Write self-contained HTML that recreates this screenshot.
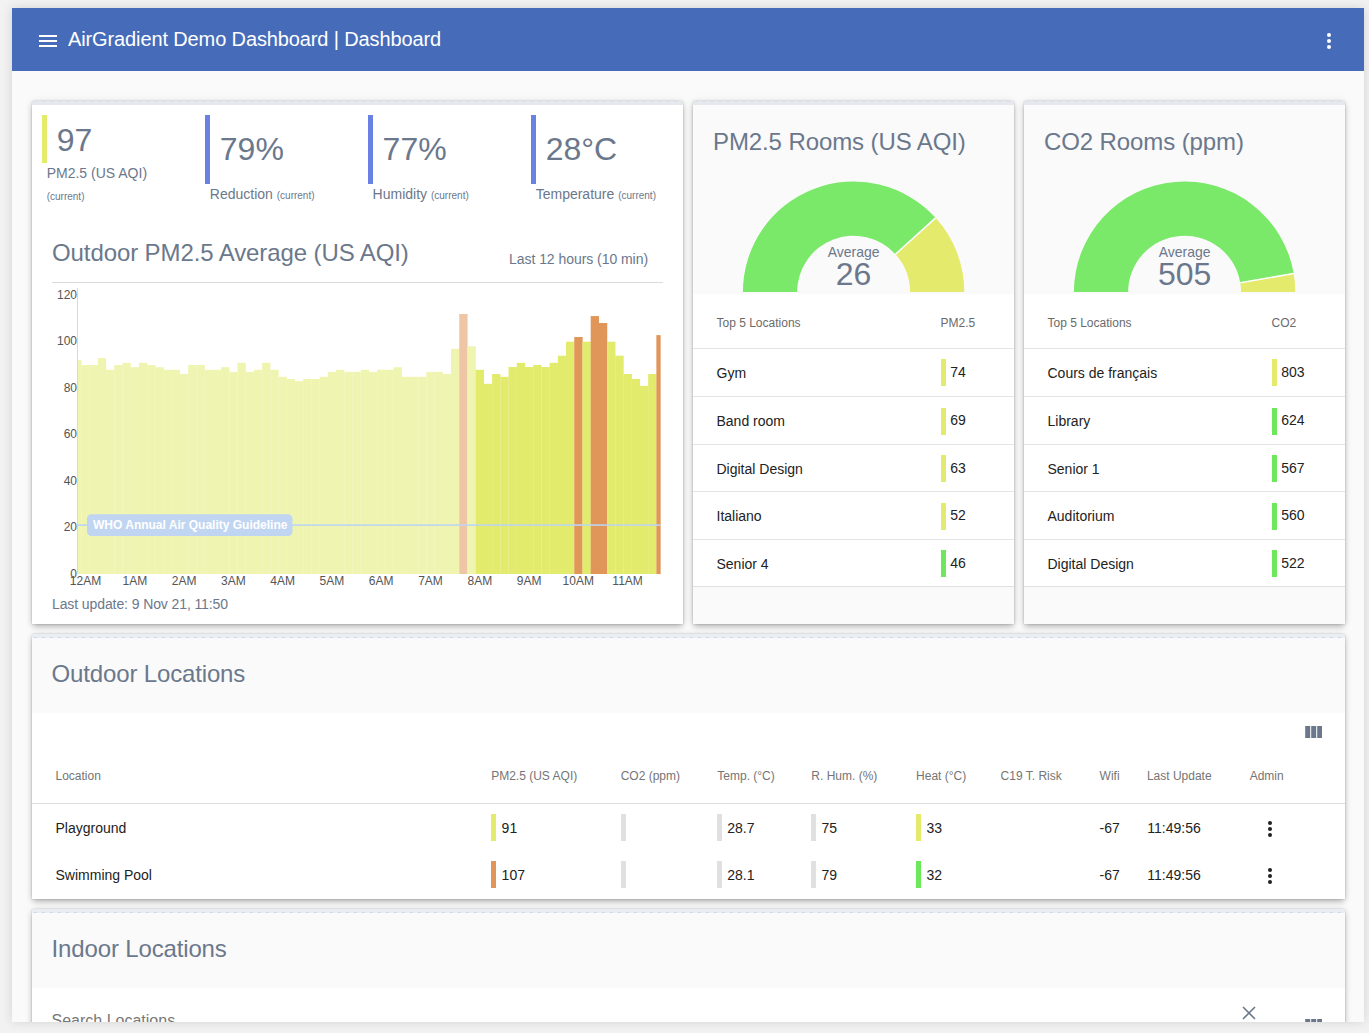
<!DOCTYPE html>
<html lang="en"><head><meta charset="utf-8"><title>AirGradient Demo Dashboard | Dashboard</title>
<style>
*{box-sizing:border-box}
html,body{margin:0;padding:0}
body{width:1369px;height:1033px;overflow:hidden;background:#f1f2f1;font-family:"Liberation Sans",Arial,Helvetica,sans-serif;color:#6b788c;position:relative}
.frame{position:absolute;left:12px;top:8px;width:1352px;height:1014px;background:#fafafa;overflow:hidden;box-shadow:0 0 10px rgba(0,0,0,.13)}
.inner{position:absolute;left:-12px;top:-8px;width:1369px;height:1033px}
.hdr{position:absolute;left:12px;top:8px;width:1352px;height:63px;background:#466cb9}
.hdr .t{position:absolute;left:56px;top:19px;font-size:20px;line-height:24px;color:#fff;white-space:nowrap;letter-spacing:-0.12px}
.card{position:absolute;background:#fff;border-top:3px solid #e5e8ed;border-radius:2px 2px 0 0;box-shadow:0 3px 6px -1px rgba(0,0,0,.3),0 0 2px rgba(0,0,0,.2),0 0 9px rgba(0,0,0,.07)}
.card::before{content:"";position:absolute;left:0;right:0;top:-3.2px;height:3.8px;background:#e5e8ed;border-radius:2px 2px 0 0}
.card::after{content:"";position:absolute;left:2px;right:2px;top:-2.9px;height:1px;background:repeating-linear-gradient(90deg,#dbe1ec 0 3.2px,transparent 3.2px 8px)}
.sect{border-top-color:#eaedf1}
.sect::before{top:-3.4px;height:4.4px;background:#eaedf1}
.sect::after{top:0.1px;background:repeating-linear-gradient(90deg,#cdd9ea 0 3.2px,transparent 3.2px 8px)}
.stat{position:absolute;top:11px;height:90px}
.stat .bar{position:absolute;left:0;top:0;width:5px}
.stat .v{position:absolute;left:15px;font-size:32px;line-height:36px;white-space:nowrap}
.stat .l{position:absolute;left:5px;font-size:14px;line-height:22px;white-space:nowrap}
.stat small{font-size:10px}
.ctitle{position:absolute;left:20px;top:134px;font-size:24px;line-height:30px;white-space:nowrap;letter-spacing:-0.1px}
.csub{position:absolute;right:35px;top:146px;font-size:14px;line-height:18px;white-space:nowrap;color:#6b788c;letter-spacing:-0.05px}
.chr{position:absolute;left:20px;top:178px;width:611px;height:1px;background:#dcdcdc}
.chart{position:absolute;left:0;top:0}
.chart text{font-size:12px;fill:#555}
.upd{position:absolute;left:20px;top:491px;font-size:14px;line-height:18px;letter-spacing:-0.1px}
.room{background:#fafafa}
.rtitle{position:absolute;left:20px;top:23.3px;font-size:24px;line-height:30px;white-space:nowrap;letter-spacing:-0.1px}
.gsvg{position:absolute;left:0;top:0;overflow:hidden}
.gsvg text{font-family:"Liberation Sans",Arial,sans-serif}
.rtable{position:absolute;left:0;top:189.5px;width:321px;background:#fff;border-bottom:1px solid #e0e0e0}
.rh,.rr{position:relative;height:47.5px;border-top:1px solid #e4e4e4}
.rh{height:54px;border-top:none;font-size:12px;color:#6a6a6a}
.rr{font-size:14px;color:#222}
.rh+.rr{height:48.5px}
.rh+.rr .c1{line-height:48px}
.rh+.rr .c2{line-height:46px}
.c1{position:absolute;left:23.5px;top:0;line-height:49px}
.c2{position:absolute;left:247.5px;top:0;line-height:47px}
.rh .c1,.rh .c2{line-height:58.6px}
.rr .c2 i{display:inline-block;width:5px;height:27px;vertical-align:middle;margin-right:5px;position:relative;top:0px;left:0.3px;margin-right:4.7px}
.sect{background:#fafafa}
.stitle{position:absolute;left:19.6px;top:22px;font-size:24px;line-height:30px;white-space:nowrap;letter-spacing:-0.15px}
.tbl{position:absolute;left:0;top:75.5px;width:100%;background:#fff}
.th{position:absolute;font-size:12px;color:#757575;white-space:nowrap;line-height:14px}
.td{position:absolute;font-size:14px;color:#222;white-space:nowrap;line-height:16px}
.ind{position:absolute;width:5px;height:27px}
</style></head><body>
<div class="frame"><div class="inner">
<div class="hdr">
<svg style="position:absolute;left:23.7px;top:21px" width="24" height="24" viewBox="0 0 24 24"><path d="M3 6h18v2H3zM3 11h18v2H3zM3 16h18v2H3z" fill="#fff"/></svg>
<div class="t">AirGradient Demo Dashboard | Dashboard</div>
<svg style="position:absolute;left:1304.6px;top:21px" width="24" height="24" viewBox="0 0 24 24"><circle cx="12" cy="6" r="2" fill="#fff"/><circle cx="12" cy="12" r="2" fill="#fff"/><circle cx="12" cy="18" r="2" fill="#fff"/></svg>
</div>

<div class="card" style="left:32px;top:101px;width:651px;height:523px">
<div class="stat" style="left:9.7px"><div class="bar" style="background:#e3ea6c;height:48px"></div><div class="v" style="top:6.6px">97</div><div class="l" style="top:47px;line-height:22px">PM2.5 (US AQI)<br><small>(current)</small></div></div>
<div class="stat" style="left:172.8px"><div class="bar" style="background:#6881e2;height:69px"></div><div class="v" style="top:15.7px">79%</div><div class="l" style="top:68px">Reduction <small>(current)</small></div></div>
<div class="stat" style="left:335.6px"><div class="bar" style="background:#6881e2;height:69px"></div><div class="v" style="top:15.7px">77%</div><div class="l" style="top:68px">Humidity <small>(current)</small></div></div>
<div class="stat" style="left:498.7px"><div class="bar" style="background:#6881e2;height:69px"></div><div class="v" style="top:15.7px">28°C</div><div class="l" style="top:68px">Temperature <small>(current)</small></div></div>
<div class="ctitle">Outdoor PM2.5 Average (US AQI)</div>
<div class="csub">Last 12 hours (10 min)</div>
<div class="chr"></div>
<svg class="chart" width="651" height="517" viewBox="0 0 651 517">
<g transform="translate(0,0)">
<rect x="45.30" y="256.20" width="4.26" height="213.80" fill="#f0f4b1"/>
<rect x="49.41" y="261.00" width="8.36" height="209.00" fill="#f0f4b1"/>
<rect x="57.62" y="261.00" width="8.36" height="209.00" fill="#f0f4b1"/>
<rect x="65.83" y="254.10" width="8.36" height="215.90" fill="#f0f4b1"/>
<rect x="74.05" y="265.80" width="8.36" height="204.20" fill="#f0f4b1"/>
<rect x="82.26" y="261.00" width="8.36" height="209.00" fill="#f0f4b1"/>
<rect x="90.48" y="258.80" width="8.36" height="211.20" fill="#f0f4b1"/>
<rect x="98.69" y="263.20" width="8.36" height="206.80" fill="#f0f4b1"/>
<rect x="106.91" y="258.80" width="8.36" height="211.20" fill="#f0f4b1"/>
<rect x="115.12" y="261.00" width="8.36" height="209.00" fill="#f0f4b1"/>
<rect x="123.33" y="263.20" width="8.36" height="206.80" fill="#f0f4b1"/>
<rect x="131.55" y="265.80" width="8.36" height="204.20" fill="#f0f4b1"/>
<rect x="139.76" y="265.80" width="8.36" height="204.20" fill="#f0f4b1"/>
<rect x="147.98" y="270.00" width="8.36" height="200.00" fill="#f0f4b1"/>
<rect x="156.19" y="261.00" width="8.36" height="209.00" fill="#f0f4b1"/>
<rect x="164.40" y="261.00" width="8.36" height="209.00" fill="#f0f4b1"/>
<rect x="172.62" y="265.80" width="8.36" height="204.20" fill="#f0f4b1"/>
<rect x="180.83" y="265.80" width="8.36" height="204.20" fill="#f0f4b1"/>
<rect x="189.05" y="263.20" width="8.36" height="206.80" fill="#f0f4b1"/>
<rect x="197.26" y="267.90" width="8.36" height="202.10" fill="#f0f4b1"/>
<rect x="205.47" y="258.80" width="8.36" height="211.20" fill="#f0f4b1"/>
<rect x="213.69" y="267.90" width="8.36" height="202.10" fill="#f0f4b1"/>
<rect x="221.90" y="265.80" width="8.36" height="204.20" fill="#f0f4b1"/>
<rect x="230.12" y="258.80" width="8.36" height="211.20" fill="#f0f4b1"/>
<rect x="238.33" y="265.80" width="8.36" height="204.20" fill="#f0f4b1"/>
<rect x="246.54" y="272.80" width="8.36" height="197.20" fill="#f0f4b1"/>
<rect x="254.76" y="275.00" width="8.36" height="195.00" fill="#f0f4b1"/>
<rect x="262.97" y="277.10" width="8.36" height="192.90" fill="#f0f4b1"/>
<rect x="271.19" y="275.00" width="8.36" height="195.00" fill="#f0f4b1"/>
<rect x="279.40" y="275.00" width="8.36" height="195.00" fill="#f0f4b1"/>
<rect x="287.61" y="272.80" width="8.36" height="197.20" fill="#f0f4b1"/>
<rect x="295.83" y="267.90" width="8.36" height="202.10" fill="#f0f4b1"/>
<rect x="304.04" y="265.80" width="8.36" height="204.20" fill="#f0f4b1"/>
<rect x="312.25" y="267.90" width="8.36" height="202.10" fill="#f0f4b1"/>
<rect x="320.47" y="267.90" width="8.36" height="202.10" fill="#f0f4b1"/>
<rect x="328.68" y="265.80" width="8.36" height="204.20" fill="#f0f4b1"/>
<rect x="336.90" y="267.90" width="8.36" height="202.10" fill="#f0f4b1"/>
<rect x="345.11" y="265.80" width="8.36" height="204.20" fill="#f0f4b1"/>
<rect x="353.32" y="265.80" width="8.36" height="204.20" fill="#f0f4b1"/>
<rect x="361.54" y="263.20" width="8.36" height="206.80" fill="#f0f4b1"/>
<rect x="369.75" y="272.80" width="8.36" height="197.20" fill="#f0f4b1"/>
<rect x="377.97" y="272.80" width="8.36" height="197.20" fill="#f0f4b1"/>
<rect x="386.18" y="272.80" width="8.36" height="197.20" fill="#f0f4b1"/>
<rect x="394.39" y="267.90" width="8.36" height="202.10" fill="#f0f4b1"/>
<rect x="402.61" y="267.90" width="8.36" height="202.10" fill="#f0f4b1"/>
<rect x="410.82" y="270.00" width="8.36" height="200.00" fill="#f0f4b1"/>
<rect x="419.04" y="244.80" width="8.36" height="225.20" fill="#f0f4b1"/>
<rect x="427.25" y="210.00" width="8.36" height="260.00" fill="#eec6a6"/>
<rect x="435.46" y="242.30" width="8.36" height="227.70" fill="#f0f4b1"/>
<rect x="443.68" y="265.80" width="8.36" height="204.20" fill="#e3eb6d"/>
<rect x="451.89" y="279.80" width="8.36" height="190.20" fill="#e3eb6d"/>
<rect x="460.11" y="270.00" width="8.36" height="200.00" fill="#e3eb6d"/>
<rect x="468.32" y="272.80" width="8.36" height="197.20" fill="#e3eb6d"/>
<rect x="476.54" y="263.00" width="8.36" height="207.00" fill="#e3eb6d"/>
<rect x="484.75" y="258.80" width="8.36" height="211.20" fill="#e3eb6d"/>
<rect x="492.96" y="263.00" width="8.36" height="207.00" fill="#e3eb6d"/>
<rect x="501.18" y="260.90" width="8.36" height="209.10" fill="#e3eb6d"/>
<rect x="509.39" y="263.00" width="8.36" height="207.00" fill="#e3eb6d"/>
<rect x="517.61" y="258.80" width="8.36" height="211.20" fill="#e3eb6d"/>
<rect x="525.82" y="251.70" width="8.36" height="218.30" fill="#e3eb6d"/>
<rect x="534.03" y="237.70" width="8.36" height="232.30" fill="#e3eb6d"/>
<rect x="542.25" y="233.00" width="8.36" height="237.00" fill="#df9658"/>
<rect x="550.46" y="237.70" width="8.36" height="232.30" fill="#e3eb6d"/>
<rect x="558.68" y="212.10" width="8.36" height="257.90" fill="#df9658"/>
<rect x="566.89" y="219.00" width="8.36" height="251.00" fill="#df9658"/>
<rect x="575.10" y="237.70" width="8.36" height="232.30" fill="#e3eb6d"/>
<rect x="583.32" y="251.70" width="8.36" height="218.30" fill="#e3eb6d"/>
<rect x="591.53" y="270.00" width="8.36" height="200.00" fill="#e3eb6d"/>
<rect x="599.75" y="274.90" width="8.36" height="195.10" fill="#e3eb6d"/>
<rect x="607.96" y="281.90" width="8.36" height="188.10" fill="#e3eb6d"/>
<rect x="616.17" y="270.00" width="8.36" height="200.00" fill="#e3eb6d"/>
<rect x="624.39" y="231.10" width="4.26" height="238.90" fill="#df9658"/>
<rect x="45" y="184" width="1" height="285.5" fill="#d9d9d9"/>
<rect x="45" y="420.29999999999995" width="583.5" height="1.6" fill="#bcd5f1"/>
<rect x="55" y="410.20000000000005" width="205.5" height="21.8" rx="4.5" fill="#c0d5f1"/>
<text x="61" y="425" style="font-size:12px;font-weight:bold;fill:#fff">WHO Annual Air Quality Guideline</text>
<text x="45" y="473.6" text-anchor="end">0</text><text x="45" y="427.1" text-anchor="end">20</text><text x="45" y="380.6" text-anchor="end">40</text><text x="45" y="334.1" text-anchor="end">60</text><text x="45" y="287.6" text-anchor="end">80</text><text x="45" y="241.1" text-anchor="end">100</text><text x="45" y="194.6" text-anchor="end">120</text>
<text x="53.5" y="481.3" text-anchor="middle">12AM</text><text x="102.8" y="481.3" text-anchor="middle">1AM</text><text x="152.1" y="481.3" text-anchor="middle">2AM</text><text x="201.4" y="481.3" text-anchor="middle">3AM</text><text x="250.6" y="481.3" text-anchor="middle">4AM</text><text x="299.9" y="481.3" text-anchor="middle">5AM</text><text x="349.2" y="481.3" text-anchor="middle">6AM</text><text x="398.5" y="481.3" text-anchor="middle">7AM</text><text x="447.8" y="481.3" text-anchor="middle">8AM</text><text x="497.1" y="481.3" text-anchor="middle">9AM</text><text x="546.3" y="481.3" text-anchor="middle">10AM</text><text x="595.6" y="481.3" text-anchor="middle">11AM</text>
</g></svg>
<div class="upd">Last update: 9 Nov 21, 11:50</div>
</div>
<div class="card room" style="left:693px;top:101px;width:321px;height:523px"><div class="rtitle">PM2.5 Rooms (US AQI)</div><svg class="gsvg" width="321" height="187.8" viewBox="0 0 321 187.8"><path d="M49.90 188.2 A110.7 110.7 0 0 1 242.61 113.84 L202.46 150.25 A56.5 56.5 0 0 0 104.10 188.2 Z" fill="#7ae868"/><path d="M242.61 113.84 A110.7 110.7 0 0 1 271.30 188.2 L217.10 188.2 A56.5 56.5 0 0 0 202.46 150.25 Z" fill="#e3ea6c"/><path d="M242.61 113.84 L202.46 150.25" stroke="#fff" stroke-width="1.6"/><text x="160.6" y="152.6" text-anchor="middle" font-size="14" fill="#6b788c">Average</text><text x="160.6" y="181.1" text-anchor="middle" font-size="32" fill="#6b788c">26</text></svg><div class="rtable"><div class="rh"><span class="c1">Top 5 Locations</span><span class="c2">PM2.5</span></div><div class="rr"><span class="c1">Gym</span><span class="c2"><i style="background:#e3ea6c"></i>74</span></div><div class="rr"><span class="c1">Band room</span><span class="c2"><i style="background:#e3ea6c"></i>69</span></div><div class="rr"><span class="c1">Digital Design</span><span class="c2"><i style="background:#e3ea6c"></i>63</span></div><div class="rr"><span class="c1">Italiano</span><span class="c2"><i style="background:#e3ea6c"></i>52</span></div><div class="rr"><span class="c1">Senior 4</span><span class="c2"><i style="background:#6de85a"></i>46</span></div></div></div>
<div class="card room" style="left:1024px;top:101px;width:321px;height:523px"><div class="rtitle">CO2 Rooms (ppm)</div><svg class="gsvg" width="321" height="187.8" viewBox="0 0 321 187.8"><path d="M49.90 188.2 A110.7 110.7 0 0 1 269.72 169.55 L216.29 178.68 A56.5 56.5 0 0 0 104.10 188.2 Z" fill="#7ae868"/><path d="M269.72 169.55 A110.7 110.7 0 0 1 271.30 188.2 L217.10 188.2 A56.5 56.5 0 0 0 216.29 178.68 Z" fill="#e3ea6c"/><path d="M269.72 169.55 L216.29 178.68" stroke="#fff" stroke-width="1.6"/><text x="160.6" y="152.6" text-anchor="middle" font-size="14" fill="#6b788c">Average</text><text x="160.6" y="181.1" text-anchor="middle" font-size="32" fill="#6b788c">505</text></svg><div class="rtable"><div class="rh"><span class="c1">Top 5 Locations</span><span class="c2">CO2</span></div><div class="rr"><span class="c1">Cours de français</span><span class="c2"><i style="background:#e3ea6c"></i>803</span></div><div class="rr"><span class="c1">Library</span><span class="c2"><i style="background:#6de85a"></i>624</span></div><div class="rr"><span class="c1">Senior 1</span><span class="c2"><i style="background:#6de85a"></i>567</span></div><div class="rr"><span class="c1">Auditorium</span><span class="c2"><i style="background:#6de85a"></i>560</span></div><div class="rr"><span class="c1">Digital Design</span><span class="c2"><i style="background:#6de85a"></i>522</span></div></div></div>

<div class="card sect" style="left:32px;top:634px;width:1313px;height:265px">
<div class="stitle">Outdoor Locations</div>
<div class="tbl" style="height:186.5px">
<svg style="position:absolute;left:1272.8px;top:13.2px" width="17.4" height="12" viewBox="0 0 17 12"><path d="M0 0h5v12H0zM6 0h5v12H6zM12 0h5v12h-5z" fill="#6b788c"/></svg>
<div style="position:absolute;left:0;top:90.3px;width:100%;height:1px;background:#dedede"></div>
<div class="th" style="left:23.5px;top:56.7px">Location</div><div class="th" style="left:459.2px;top:56.7px">PM2.5 (US AQI)</div><div class="th" style="left:588.7px;top:56.7px">CO2 (ppm)</div><div class="th" style="left:685.3px;top:56.7px">Temp. (°C)</div><div class="th" style="left:779.3px;top:56.7px">R. Hum. (%)</div><div class="th" style="left:884.1px;top:56.7px">Heat (°C)</div><div class="th" style="left:968.6px;top:56.7px">C19 T. Risk</div><div class="th" style="left:1067.6px;top:56.7px">Wifi</div><div class="th" style="left:1114.9px;top:56.7px">Last Update</div><div class="th" style="left:1217.7px;top:56.7px">Admin</div><div class="td" style="left:23.5px;top:107.5px">Playground</div><div class="ind" style="left:459.2px;top:101.7px;background:#e3ea6c"></div><div class="td" style="left:469.6px;top:107.5px">91</div><div class="ind" style="left:588.7px;top:101.7px;background:#e0e0e0"></div><div class="ind" style="left:684.8px;top:101.7px;background:#e0e0e0"></div><div class="td" style="left:695.2px;top:107.5px">28.7</div><div class="ind" style="left:779.0px;top:101.7px;background:#e0e0e0"></div><div class="td" style="left:789.4px;top:107.5px">75</div><div class="ind" style="left:884.1px;top:101.7px;background:#e3ea6c"></div><div class="td" style="left:894.5px;top:107.5px">33</div><div class="td" style="left:1067.6px;top:107.5px">-67</div><div class="td" style="left:1115.3px;top:107.5px">11:49:56</div><svg style="position:absolute;left:1225.7px;top:104.5px" width="24" height="24" viewBox="0 0 24 24"><circle cx="12" cy="6" r="2" fill="#222"/><circle cx="12" cy="12" r="2" fill="#222"/><circle cx="12" cy="18" r="2" fill="#222"/></svg><div class="td" style="left:23.5px;top:154.5px">Swimming Pool</div><div class="ind" style="left:459.2px;top:148.7px;background:#df9658"></div><div class="td" style="left:469.6px;top:154.5px">107</div><div class="ind" style="left:588.7px;top:148.7px;background:#e0e0e0"></div><div class="ind" style="left:684.8px;top:148.7px;background:#e0e0e0"></div><div class="td" style="left:695.2px;top:154.5px">28.1</div><div class="ind" style="left:779.0px;top:148.7px;background:#e0e0e0"></div><div class="td" style="left:789.4px;top:154.5px">79</div><div class="ind" style="left:884.1px;top:148.7px;background:#6de85a"></div><div class="td" style="left:894.5px;top:154.5px">32</div><div class="td" style="left:1067.6px;top:154.5px">-67</div><div class="td" style="left:1115.3px;top:154.5px">11:49:56</div><svg style="position:absolute;left:1225.7px;top:151.5px" width="24" height="24" viewBox="0 0 24 24"><circle cx="12" cy="6" r="2" fill="#222"/><circle cx="12" cy="12" r="2" fill="#222"/><circle cx="12" cy="18" r="2" fill="#222"/></svg>
</div>
</div>

<div class="card sect" style="left:32px;top:909px;width:1313px;height:200px">
<div class="stitle">Indoor Locations</div>
<div class="tbl" style="height:150px;top:76px">
<div style="position:absolute;left:19.5px;top:22.5px;font-size:16px;line-height:20px;color:#777">Search Locations</div>
<svg style="position:absolute;left:1210px;top:18px" width="14" height="14" viewBox="0 0 14 14"><path d="M1 1L13 13M13 1L1 13" stroke="#6b788c" stroke-width="1.6" fill="none"/></svg>
<svg style="position:absolute;left:1272.8px;top:30.5px" width="17.4" height="12" viewBox="0 0 17 12"><path d="M0 0h5v12H0zM6 0h5v12H6zM12 0h5v12h-5z" fill="#6b788c"/></svg>
</div>
</div>

</div></div>
</body></html>
